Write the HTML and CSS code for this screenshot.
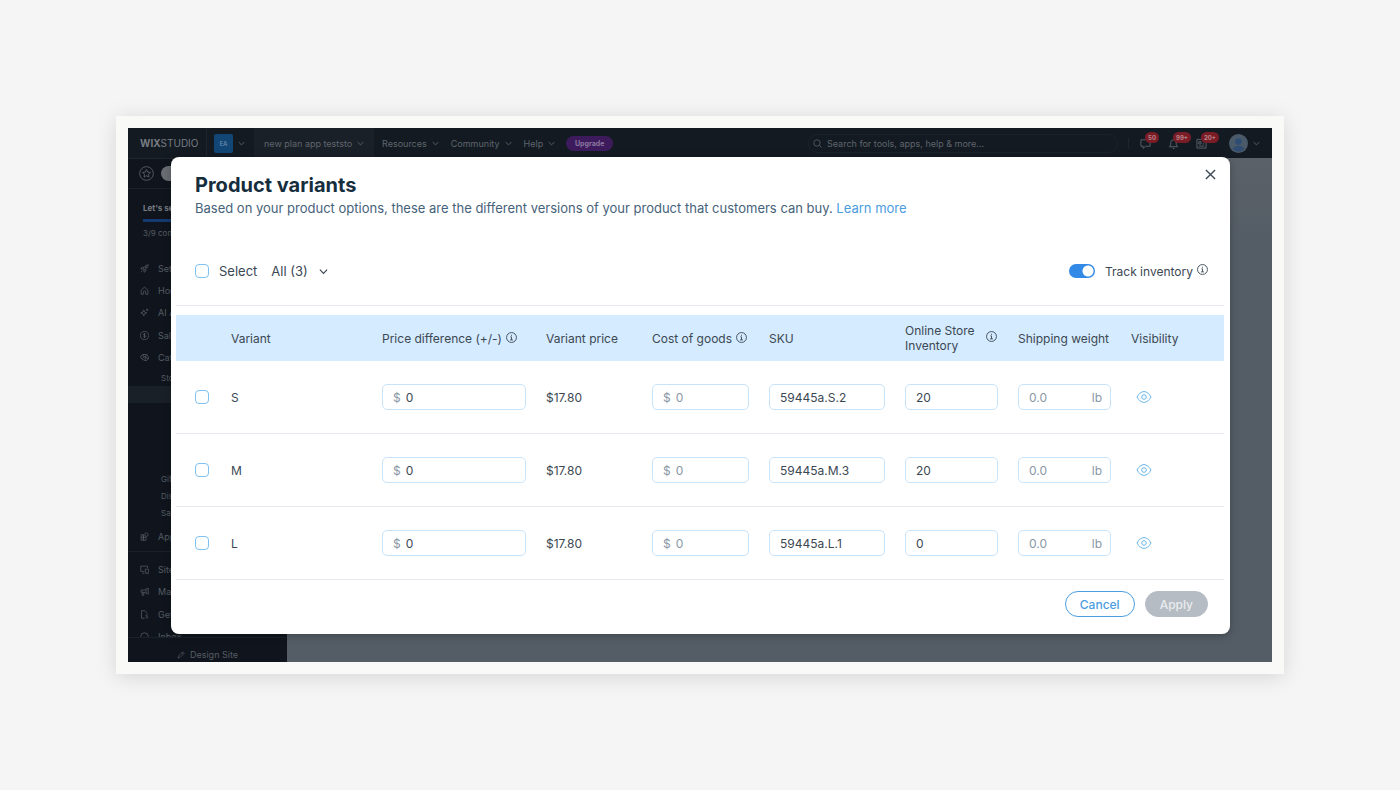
FILE: index.html
```html
<!DOCTYPE html>
<html lang="en">
<head>
    <meta charset="UTF-8">
    <meta name="viewport" content="width=device-width, initial-scale=1.0">
    <title>Product variants</title>
    <link rel="stylesheet" href="styles.css">
</head>
<body>
    <svg class="sprite" aria-hidden="true">
        <symbol id="chevron" viewBox="0 0 10 10"><path d="M1 3l4 4 4-4"/></symbol>
        <symbol id="info" viewBox="0 0 12 12"><circle cx="6" cy="6" r="5.400"/><path d="M4.800 5.300H6v3.300M4.400 8.600h3.200M6 3v1.100"/></symbol>
        <symbol id="eye" viewBox="0 0 16 14"><path d="M1 7c2-3.700 4.300-5.400 7-5.400S13 3.300 15 7c-2 3.700-4.300 5.400-7 5.400S3 10.700 1 7z"/><circle cx="8" cy="7" r="2.300"/></symbol>
        <symbol id="star" viewBox="0 0 16 16"><circle cx="8" cy="8" r="7.300"/><path d="M8 3.800l1.300 2.700 2.900.4-2.100 2 .5 2.900L8 10.400l-2.600 1.400.5-2.900-2.100-2 2.900-.4z"/></symbol>
        <symbol id="rocket" viewBox="0 0 12 12"><path d="M4 7.500C5 4 7.500 1.500 11 1c-.3 3.500-2.800 6-6.500 7.200zM5 4.500L2.500 4.300 1 6.500l2.500.2M7.500 7l.2 2.500L5.500 11l-.3-2.500M3 9l-2 2"/><circle cx="7.800" cy="4.200" r=".8"/></symbol>
        <symbol id="home" viewBox="0 0 12 12"><path d="M1.500 5.500L6 1.500l4.500 4V11H7.500V8a1.500 1.500 0 0 0-3 0v3h-3z"/></symbol>
        <symbol id="sparkle" viewBox="0 0 12 12"><path d="M5 2.500l1.100 2.900L9 6.500 6.100 7.600 5 10.500 3.900 7.600 1 6.500l2.900-1.100zM9.500 1v3M8 2.500h3"/></symbol>
        <symbol id="sales" viewBox="0 0 12 12"><circle cx="6" cy="6" r="5.400"/><path d="M7.600 4.300C6.800 3.400 4.500 3.600 4.500 4.800c0 1.500 3.100.9 3.100 2.400 0 1.300-2.400 1.400-3.300.4M6 2.700v6.600"/></symbol>
        <symbol id="catalog" viewBox="0 0 12 12"><path d="M1 4l3-2h5l2 3v3L9 10H6L1 6.500zM4 2l1 3-2 2.500M9 2L7 5l4 3M5 5h2v5"/></symbol>
        <symbol id="apps" viewBox="0 0 12 12"><path d="M1.500 3.500h3V11h-3zM1.500 7H8v4H4.500V3.500"/><circle cx="8.500" cy="3.500" r="2.300"/></symbol>
        <symbol id="channels" viewBox="0 0 12 12"><path d="M5.500 8.500H1v-7h9V4M3 11h2.500M7 5.500h4.500V11H7zM9 9.500h.6"/></symbol>
        <symbol id="megaphone" viewBox="0 0 12 12"><path d="M1.500 4h4L11 1.500v8L5.500 7h-4zM3 7v4h2V7M8 3v5"/></symbol>
        <symbol id="paid" viewBox="0 0 12 12"><path d="M6 11H2V1h4.500L9 3.500V5M10.500 7c-1-.8-2.700-.5-2.700.6 0 1.200 2.700.7 2.700 2s-2 1.400-3 .5"/></symbol>
        <symbol id="inbox" viewBox="0 0 12 12"><circle cx="6" cy="6" r="5"/></symbol>
        <symbol id="pencil" viewBox="0 0 12 12"><path d="M1.500 10.500l.8-3L8.500 1.300l2.200 2.200-6.200 6.200zM7.200 2.600l2.200 2.200"/></symbol>
        <symbol id="search" viewBox="0 0 12 12"><circle cx="5.300" cy="5.300" r="4.300"/><path d="M8.500 8.500l3 3"/></symbol>
        <symbol id="chat" viewBox="0 0 12 12"><path d="M1 2h10v7H6l-2.500 2.300V9H1z"/></symbol>
        <symbol id="bell" viewBox="0 0 12 12"><path d="M1.500 9.500L3 7.500V5a3 3 0 0 1 6 0v2.500l1.500 2zM5 11.300h2M6 2V1"/></symbol>
        <symbol id="news" viewBox="0 0 12 12"><path d="M1 1.500h10v9.500H1zM3 4h2.500v2.500H3zM7.300 4H9M7.300 6.500H9M3 8.800h6"/></symbol>
        <symbol id="close" viewBox="0 0 12 12"><path d="M1 1l10 10M11 1L1 11"/></symbol>
    </svg>

    <div class="frame">
        <div class="screen">
            <header class="topbar">
                <div class="logo"><b>WIX</b>STUDIO</div>
                <button class="account"><span class="account-badge">EA</span><svg class="chevron"><use href="#chevron"/></svg></button>
                <button class="site-name">new plan app teststo<svg class="chevron"><use href="#chevron"/></svg></button>
                <nav class="top-menu">
                    <button>Resources<svg class="chevron"><use href="#chevron"/></svg></button>
                    <button>Community<svg class="chevron"><use href="#chevron"/></svg></button>
                    <button>Help<svg class="chevron"><use href="#chevron"/></svg></button>
                </nav>
                <button class="upgrade">Upgrade</button>
                <label class="search">
                    <svg><use href="#search"/></svg>
                    <input type="text" placeholder="Search for tools, apps, help &amp; more..." aria-label="Search">
                </label>
                <div class="alerts">
                    <button aria-label="Messages"><svg><use href="#chat"/></svg><span class="count">50</span></button>
                    <button aria-label="Notifications"><svg><use href="#bell"/></svg><span class="count">99+</span></button>
                    <button aria-label="News"><svg><use href="#news"/></svg><span class="count">20+</span></button>
                </div>
                <button class="profile" aria-label="Profile">
                    <svg class="avatar" viewBox="0 0 20 20"><circle cx="10" cy="10" r="10" fill="#4b5a68"/><circle cx="10" cy="8" r="3.500" fill="#2f4d72"/><path d="M4 16c1-5 11-5 12 0-3 3.500-9 3.500-12 0z" fill="#2f4d72"/></svg>
                    <svg class="chevron"><use href="#chevron"/></svg>
                </button>
            </header>

            <div class="workspace">
                <aside class="sidebar">
                    <div class="quick">
                        <svg class="star"><use href="#star"/></svg>
                        <span class="quick-pill"></span>
                    </div>
                    <div class="setup">
                        <b>Let's set up</b>
                        <div class="progress"></div>
                        <span>3/9 completed</span>
                    </div>
                    <nav class="side-nav">
                        <div class="nav-group nav-main">
                            <a href="#"><svg><use href="#rocket"/></svg>Setup</a>
                            <a href="#"><svg><use href="#home"/></svg>Home</a>
                            <a href="#"><svg><use href="#sparkle"/></svg>AI Agents</a>
                            <a href="#"><svg><use href="#sales"/></svg>Sales</a>
                            <a href="#"><svg><use href="#catalog"/></svg>Catalog</a>
                        </div>
                        <div class="nav-sub">
                            <a href="#">Store Products</a>
                            <a href="#" class="active"></a>
                        </div>
                        <div class="nav-sub nav-sub-end">
                            <a href="#">Gift Cards</a>
                            <a href="#">Discounts</a>
                            <a href="#">Sales Channels</a>
                        </div>
                        <div class="nav-group nav-apps">
                            <a href="#"><svg><use href="#apps"/></svg>Apps</a>
                        </div>
                        <div class="nav-group nav-bottom">
                            <a href="#"><svg><use href="#channels"/></svg>Site</a>
                            <a href="#"><svg><use href="#megaphone"/></svg>Marketing</a>
                            <a href="#"><svg><use href="#paid"/></svg>Getting Paid</a>
                            <a href="#"><svg><use href="#inbox"/></svg>Inbox</a>
                        </div>
                    </nav>
                    <a href="#" class="design-site"><svg><use href="#pencil"/></svg>Design Site</a>
                </aside>
                <div class="canvas"></div>
            </div>

            <section class="modal" role="dialog" aria-labelledby="modal-title">
                <button class="close" aria-label="Close"><svg><use href="#close"/></svg></button>
                <div class="modal-header">
                    <h1 id="modal-title">Product variants</h1>
                    <p>Based on your product options, these are the different versions of your product that customers can buy. <a href="#">Learn more</a></p>
                </div>

                <div class="toolbar">
                    <label class="select-all"><input type="checkbox" class="checkbox">Select</label>
                    <div class="filter">
                        <select aria-label="Filter variants"><option>All (3)</option></select>
                        <svg class="chevron"><use href="#chevron"/></svg>
                    </div>
                    <label class="track"><input type="checkbox" class="toggle" checked>Track inventory</label>
                    <svg class="info info-raised"><use href="#info"/></svg>
                </div>

                <div class="table-wrap">
                    <table class="variants">
                        <colgroup>
                            <col class="col-check"><col class="col-variant"><col class="col-diff"><col class="col-price"><col class="col-cost"><col class="col-sku"><col class="col-stock"><col class="col-weight"><col>
                        </colgroup>
                        <thead>
                            <tr>
                                <th></th>
                                <th>Variant</th>
                                <th><span class="th-info">Price difference (+/-)<svg class="info"><use href="#info"/></svg></span></th>
                                <th>Variant price</th>
                                <th><span class="th-info">Cost of goods<svg class="info"><use href="#info"/></svg></span></th>
                                <th>SKU</th>
                                <th><span class="th-info th-spread">Online Store<br>Inventory<svg class="info"><use href="#info"/></svg></span></th>
                                <th>Shipping weight</th>
                                <th>Visibility</th>
                            </tr>
                        </thead>
                        <tbody>
                            <tr>
                                <td class="check-cell"><input type="checkbox" class="checkbox" aria-label="Select S"></td>
                                <td>S</td>
                                <td><label class="field"><span>$</span><input type="text" value="0" aria-label="Price difference S"></label></td>
                                <td>$17.80</td>
                                <td><label class="field"><span>$</span><input type="text" placeholder="0" aria-label="Cost of goods S"></label></td>
                                <td><label class="field"><input type="text" value="59445a.S.2" aria-label="SKU S"></label></td>
                                <td><label class="field"><input type="text" value="20" aria-label="Inventory S"></label></td>
                                <td><label class="field"><input type="text" placeholder="0.0" aria-label="Shipping weight S"><span>lb</span></label></td>
                                <td><button class="visibility" aria-label="Toggle visibility of S"><svg><use href="#eye"/></svg></button></td>
                            </tr>
                            <tr>
                                <td class="check-cell"><input type="checkbox" class="checkbox" aria-label="Select M"></td>
                                <td>M</td>
                                <td><label class="field"><span>$</span><input type="text" value="0" aria-label="Price difference M"></label></td>
                                <td>$17.80</td>
                                <td><label class="field"><span>$</span><input type="text" placeholder="0" aria-label="Cost of goods M"></label></td>
                                <td><label class="field"><input type="text" value="59445a.M.3" aria-label="SKU M"></label></td>
                                <td><label class="field"><input type="text" value="20" aria-label="Inventory M"></label></td>
                                <td><label class="field"><input type="text" placeholder="0.0" aria-label="Shipping weight M"><span>lb</span></label></td>
                                <td><button class="visibility" aria-label="Toggle visibility of M"><svg><use href="#eye"/></svg></button></td>
                            </tr>
                            <tr>
                                <td class="check-cell"><input type="checkbox" class="checkbox" aria-label="Select L"></td>
                                <td>L</td>
                                <td><label class="field"><span>$</span><input type="text" value="0" aria-label="Price difference L"></label></td>
                                <td>$17.80</td>
                                <td><label class="field"><span>$</span><input type="text" placeholder="0" aria-label="Cost of goods L"></label></td>
                                <td><label class="field"><input type="text" value="59445a.L.1" aria-label="SKU L"></label></td>
                                <td><label class="field"><input type="text" value="0" aria-label="Inventory L"></label></td>
                                <td><label class="field"><input type="text" placeholder="0.0" aria-label="Shipping weight L"><span>lb</span></label></td>
                                <td><button class="visibility" aria-label="Toggle visibility of L"><svg><use href="#eye"/></svg></button></td>
                            </tr>
                        </tbody>
                    </table>
                </div>

                <div class="modal-footer">
                    <button class="btn btn-cancel">Cancel</button>
                    <button class="btn btn-apply" disabled>Apply</button>
                </div>
            </section>
        </div>
    </div>
</body>
</html>
```
FILE: styles.css
```css
* {
    box-sizing: border-box;
}
body {
    margin: 0;
    padding: 116px;
    background: #f5f5f5;
    font-family: Inter, "Open Sans", sans-serif;
    color: #3b4853;
}
button, input, select {
    font: inherit;
    color: inherit;
    background: none;
    border: none;
    margin: 0;
    padding: 0;
}
button {
    cursor: pointer;
}
a {
    color: inherit;
    text-decoration: none;
}
svg {
    display: block;
    flex: none;
    fill: none;
    stroke: currentColor;
    stroke-width: 1;
}
.sprite {
    position: absolute;
    width: 0;
    height: 0;
}
.chevron {
    width: 7px;
    height: 7px;
    stroke-width: 1.3;
}
.frame {
    padding: 12px;
    background: #f9f9f7;
    box-shadow: 0 3px 20px rgba(0, 0, 0, 0.13);
}
.screen {
    position: relative;
    display: flex;
    flex-direction: column;
    min-height: calc(100vh - 256px);
    background: #545d66;
    overflow: hidden;
}

/* Top bar */
.topbar {
    display: flex;
    align-items: center;
    height: 30px;
    padding-right: 12px;
    background: #131a22;
    color: #5f656c;
    font-size: 9px;
}
.logo {
    width: 79px;
    padding-left: 12px;
    color: #777c82;
    font-size: 10px;
    line-height: 30px;
    border-right: 1px solid #1e252d;
}
.account {
    display: flex;
    align-items: center;
    gap: 5px;
    width: 47px;
    padding-left: 7px;
}
.account-badge {
    width: 19px;
    height: 19px;
    border-radius: 2px;
    background: #124675;
    color: #587da0;
    font-size: 6px;
    font-weight: 700;
    line-height: 19px;
}
.site-name {
    display: flex;
    align-items: center;
    justify-content: space-between;
    width: 120px;
    height: 30px;
    padding: 0 10px;
    background: #1a2028;
}
.top-menu {
    display: flex;
    gap: 12px;
    padding: 0 11px 0 8px;
}
.top-menu button {
    display: flex;
    align-items: center;
    gap: 5px;
}
.upgrade {
    width: 47px;
    height: 15px;
    border-radius: 8px;
    background: #3d1a5c;
    color: #8b76a0;
    font-size: 7px;
    font-weight: 700;
}
.search {
    display: flex;
    align-items: center;
    gap: 5px;
    width: 310px;
    height: 19px;
    margin-left: auto;
    padding: 0 4px;
    border: 1px solid #1a222a;
    border-radius: 10px;
}
.search svg {
    width: 9px;
    height: 9px;
}
.search input {
    flex: 1;
}
.search input::placeholder {
    color: #5f656c;
    opacity: 1;
}
.alerts {
    display: flex;
    gap: 17px;
    margin: 0 22px 0 10px;
    padding-left: 11px;
    border-left: 1px solid #1e252d;
}
.alerts button {
    position: relative;
}
.alerts svg {
    width: 11px;
    height: 11px;
}
.count {
    position: absolute;
    left: 5px;
    top: -6px;
    min-width: 14px;
    padding: 0 3px;
    border-radius: 6px;
    background: #7a1c26;
    color: #b98389;
    font-size: 6px;
    font-weight: 700;
    line-height: 11px;
}
.profile {
    display: flex;
    align-items: center;
    gap: 5px;
}
.avatar {
    width: 19px;
    height: 19px;
    stroke: none;
}

/* Sidebar */
.workspace {
    display: flex;
    flex: 1;
}
.sidebar {
    display: flex;
    flex-direction: column;
    width: 159px;
    background: #10151d;
    color: #555c63;
    font-size: 9px;
    white-space: nowrap;
    overflow: hidden;
}
.canvas {
    flex: 1;
    background: linear-gradient(#5b6168 0, #545d66 80px);
}
.quick {
    display: flex;
    align-items: center;
    gap: 7px;
    height: 31px;
    padding-left: 11px;
    border-top: 1px solid #1e252d;
    border-bottom: 1px solid #1a2129;
}
.star {
    width: 15px;
    height: 15px;
}
.quick-pill {
    width: 80px;
    height: 15px;
    border-radius: 8px;
    background: #6a6d72;
}
.setup {
    display: grid;
    gap: 6px;
    padding: 14px 15px 0;
    font-size: 8px;
    line-height: 10px;
}
.setup b {
    color: #777c82;
}
.progress {
    height: 3px;
    background: #153a70;
}
.side-nav {
    flex: 1 1 0px;
    display: flex;
    flex-direction: column;
    padding-top: 19px;
    overflow: hidden;
}
.side-nav a {
    display: flex;
    align-items: center;
}
.nav-group {
    display: grid;
    flex: none;
    grid-auto-rows: 1fr;
    padding: 0 12px;
}
.nav-group a {
    gap: 9px;
}
.nav-group svg {
    width: 9px;
    height: 9px;
}
.nav-main {
    height: 112px;
}
.nav-sub a {
    height: 17px;
    padding-left: 33px;
    font-size: 8px;
}
.nav-sub .active {
    background: #1a2027;
}
.nav-sub-end {
    padding-top: 67px;
}
.nav-apps {
    height: 31px;
    border-bottom: 1px solid #1a2129;
}
.nav-bottom {
    height: 90px;
    margin-top: 6px;
}
.design-site {
    display: flex;
    align-items: center;
    justify-content: center;
    gap: 5px;
    height: 25px;
    padding-top: 9px;
    border-top: 1px solid #1a2129;
}
.design-site svg {
    width: 8px;
    height: 8px;
}

/* Modal */
.modal {
    position: absolute;
    top: 29px;
    left: 43px;
    right: 42px;
    background: #fff;
    border-radius: 8px;
    box-shadow: 0 2px 8px rgba(0, 0, 0, 0.25);
    font-size: 12px;
}
.close {
    position: absolute;
    top: 12px;
    right: 14px;
}
.close svg {
    width: 11px;
    height: 11px;
    stroke-width: 1.5;
}
.modal-header {
    padding: 14px 24px 0;
}
.modal-header h1 {
    margin: 0;
    color: #162d3d;
    font-size: 20px;
    line-height: 28px;
}
.modal-header p {
    margin: 0;
    color: #46627a;
    font-size: 13px;
    line-height: 18px;
}
.modal-header a {
    color: #4b9de0;
}
.toolbar {
    display: flex;
    align-items: center;
    height: 89px;
    margin: 0 6px 0 5px;
    padding: 20px 16px 0 19px;
    border-bottom: 1px solid #e6eaee;
    font-size: 13px;
}
.select-all, .track {
    display: flex;
    align-items: center;
    gap: 10px;
}
.filter {
    position: relative;
    margin: 0 auto 0 14px;
}
.filter select {
    appearance: none;
    padding-right: 20px;
}
.filter .chevron {
    position: absolute;
    top: 4px;
    right: 0;
    width: 9px;
    height: 9px;
    pointer-events: none;
}
.track {
    font-size: 12px;
}
.checkbox {
    appearance: none;
    display: block;
    width: 14px;
    height: 14px;
    border: 1px solid #7fc1f0;
    border-radius: 4px;
    background: #fff;
}
.toggle {
    appearance: none;
    width: 26px;
    height: 14px;
    border-radius: 7px;
    background: radial-gradient(circle at 19px 7px, #fff 5px, #3289e6 6px);
}
.info {
    width: 11px;
    height: 11px;
}
.info-raised {
    margin: 0 0 4px 4px;
}

/* Variants table */
.table-wrap {
    padding: 9px 6px 0 5px;
}
.variants {
    width: 100%;
    table-layout: fixed;
    border-collapse: separate;
    border-spacing: 0;
}
.col-check { width: 55px; }
.col-variant { width: 151px; }
.col-diff { width: 164px; }
.col-price { width: 106px; }
.col-cost { width: 117px; }
.col-sku { width: 136px; }
.col-stock, .col-weight { width: 113px; }
.variants th {
    height: 46px;
    padding: 0;
    background: #d5ebff;
    font-weight: 400;
    line-height: 15px;
    text-align: left;
    white-space: nowrap;
}
.th-info {
    position: relative;
    display: inline-block;
    padding-right: 15px;
}
.th-info .info {
    position: absolute;
    top: 1px;
    right: 0;
}
.th-spread {
    padding-right: 22px;
}
.th-spread .info {
    top: 8px;
}
.variants td {
    height: 73px;
    padding: 0 20px 0 0;
    border-bottom: 1px solid #e6eaee;
}
.variants .check-cell {
    padding-left: 19px;
}
.field {
    display: flex;
    align-items: center;
    gap: 5px;
    height: 26px;
    padding: 0 8px 0 10px;
    border: 1px solid #c8e4fb;
    border-radius: 5px;
}
.field span, .field input::placeholder {
    color: #8a97a5;
    opacity: 1;
}
.field input {
    flex: 1;
    width: 100%;
    min-width: 0;
}
.visibility {
    display: block;
    margin-left: 5px;
    color: #6bb7ec;
}
.visibility svg {
    width: 16px;
    height: 14px;
}
.modal-footer {
    display: flex;
    justify-content: flex-end;
    gap: 10px;
    padding: 11px 22px 17px;
}
.btn {
    height: 26px;
    padding: 0 14px;
    border: 1px solid #4b9de0;
    border-radius: 13px;
    color: #4b9de0;
    font-weight: 500;
}
.btn-apply {
    border-color: #b6bcc3;
    background: #b6bcc3;
    color: #e9ecef;
}
```
